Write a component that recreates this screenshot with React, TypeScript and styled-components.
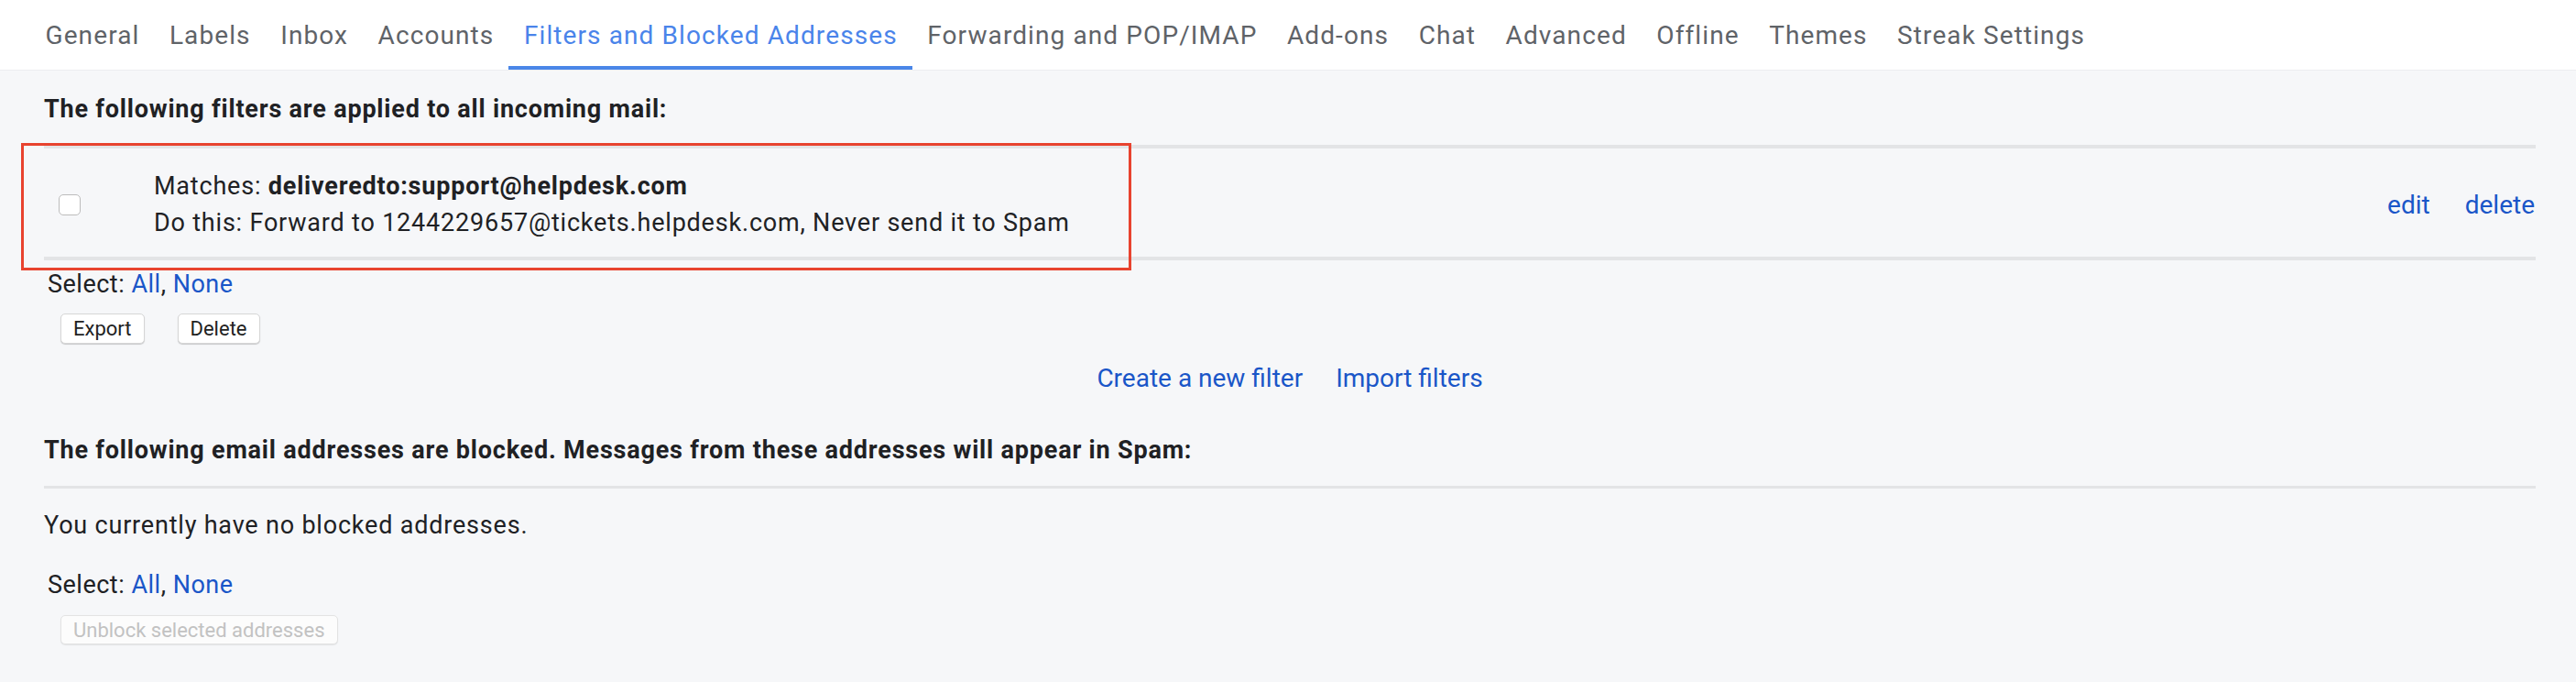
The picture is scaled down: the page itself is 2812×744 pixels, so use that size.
import React from 'react';
import styled, { createGlobalStyle } from 'styled-components';

const GlobalStyle = createGlobalStyle`
  html, body {
    margin: 0;
    padding: 0;
    background: #f6f7f9;
    font-family: Roboto, "Liberation Sans", Arial, sans-serif;
    color: #202124;
  }
`;

const tabs = [
  'General',
  'Labels',
  'Inbox',
  'Accounts',
  'Filters and Blocked Addresses',
  'Forwarding and POP/IMAP',
  'Add-ons',
  'Chat',
  'Advanced',
  'Offline',
  'Themes',
  'Streak Settings',
];

const Page = styled.div`
  min-height: 744px;
`;

const TabBar = styled.nav`
  display: flex;
  height: 77px;
  padding-left: 33px;
  background: #fff;
  border-bottom: 1px solid #eceef1;
  box-sizing: border-box;
`;

const Tab = styled.div<{ $active?: boolean }>`
  display: flex;
  align-items: center;
  padding: 0 16px 0 16.5px;
  font-size: 28px;
  letter-spacing: 1.1px;
  color: ${(p) => (p.$active ? '#4a84ea' : '#5f6368')};
  box-shadow: ${(p) => (p.$active ? 'inset 0 -4px 0 #4a86e8' : 'none')};
  white-space: nowrap;
  cursor: pointer;
`;

const Content = styled.main`
  padding: 0 44px 0 48px;
`;

const SectionTitle = styled.h2<{ $top: number }>`
  margin: ${(p) => p.$top}px 0 0;
  font-size: 27px;
  letter-spacing: 0.8px;
  line-height: 36px;
  font-weight: 700;
  color: #202124;
`;

const FilterTable = styled.div`
  position: relative;
  margin-top: 21px;
  border-top: 4px solid #e3e4e6;
  border-bottom: 4px solid #e3e4e6;
`;

const Highlight = styled.div`
  position: absolute;
  left: -25px;
  top: -6px;
  width: 1212px;
  height: 139px;
  border: 3px solid #e8432f;
  box-sizing: border-box;
  pointer-events: none;
`;

const FilterRow = styled.div`
  display: flex;
  align-items: center;
  padding: 21px 0 17px;
`;

const CheckCell = styled.div`
  width: 120px;
  padding-left: 16px;
  box-sizing: border-box;
  display: flex;
  align-items: center;
`;

const Checkbox = styled.span`
  display: block;
  width: 24px;
  height: 23px;
  border: 1.5px solid #bcbcbc;
  border-radius: 5px;
  background: #fff;
  box-sizing: border-box;
`;

const FilterText = styled.div`
  flex: 1;
  font-size: 27px;
  letter-spacing: 0.8px;
  line-height: 40px;
  color: #202124;

  b {
    font-weight: 700;
  }
`;

const Actions = styled.div`
  display: flex;
  gap: 38px;
  padding-right: 1px;
`;

const Link = styled.a<{ $size?: number }>`
  color: #1a56c8;
  text-decoration: none;
  font-size: ${(p) => (p.$size ? `${p.$size}px` : 'inherit')};
  letter-spacing: ${(p) => (p.$size ? '0' : 'inherit')};
  cursor: pointer;
`;

const SelectLine = styled.div<{ $top: number }>`
  margin-top: ${(p) => p.$top}px;
  padding-left: 4px;
  font-size: 27px;
  letter-spacing: 0.5px;
  line-height: 36px;
`;

const ButtonRow = styled.div<{ $top: number }>`
  display: flex;
  gap: 36px;
  margin-top: ${(p) => p.$top}px;
  padding-left: 18px;
`;

const Button = styled.button`
  height: 33px;
  padding: 0 13px;
  font-family: Roboto, "Liberation Sans", Arial, sans-serif;
  font-size: 22px;
  color: #222;
  background: #fff;
  border: 1px solid #d6d6d6;
  border-radius: 5px;
  box-shadow: 0 1px 1px rgba(0, 0, 0, 0.18);
  cursor: pointer;

  &:disabled {
    height: 32px;
    color: #c2c2c2;
    border-color: #e3e3e3;
    background: #fcfcfc;
    box-shadow: 0 1px 1px rgba(0, 0, 0, 0.08);
    cursor: default;
  }
`;

const CenterLinks = styled.div`
  display: flex;
  justify-content: center;
  gap: 36px;
  margin-top: 18px;
  line-height: 40px;
`;

const Divider = styled.div`
  margin-top: 21px;
  height: 3px;
  background: #e3e4e6;
`;

const Note = styled.div`
  margin-top: 22px;
  font-size: 27px;
  letter-spacing: 0.8px;
  line-height: 36px;
`;

export default function App() {
  return (
    <Page>
      <GlobalStyle />
      <TabBar>
        {tabs.map((t) => (
          <Tab key={t} $active={t === 'Filters and Blocked Addresses'}>
            {t}
          </Tab>
        ))}
      </TabBar>
      <Content>
        <SectionTitle $top={24}>The following filters are applied to all incoming mail:</SectionTitle>
        <FilterTable>
          <FilterRow>
            <CheckCell>
              <Checkbox />
            </CheckCell>
            <FilterText>
              <div>
                Matches: <b>deliveredto:support@helpdesk.com</b>
              </div>
              <div>Do this: Forward to 1244229657@tickets.helpdesk.com, Never send it to Spam</div>
            </FilterText>
            <Actions>
              <Link $size={28}>edit</Link>
              <Link $size={28}>delete</Link>
            </Actions>
          </FilterRow>
          <Highlight />
        </FilterTable>
        <SelectLine $top={8}>
          Select: <Link>All</Link>, <Link>None</Link>
        </SelectLine>
        <ButtonRow $top={14}>
          <Button>Export</Button>
          <Button>Delete</Button>
        </ButtonRow>
        <CenterLinks>
          <Link $size={28}>Create a new filter</Link>
          <Link $size={28}>Import filters</Link>
        </CenterLinks>
        <SectionTitle $top={40}>
          The following email addresses are blocked. Messages from these addresses will appear in Spam:
        </SectionTitle>
        <Divider />
        <Note>You currently have no blocked addresses.</Note>
        <SelectLine $top={29}>
          Select: <Link>All</Link>, <Link>None</Link>
        </SelectLine>
        <ButtonRow $top={15}>
          <Button disabled>Unblock selected addresses</Button>
        </ButtonRow>
      </Content>
    </Page>
  );
}
